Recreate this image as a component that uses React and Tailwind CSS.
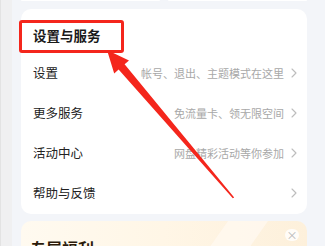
import React from 'react';

const rows = [
    { title: '设置', hint: '帐号、退出、主题模式在这里' },
    { title: '更多服务', hint: '免流量卡、领无限空间' },
    { title: '活动中心', hint: '网盘精彩活动等你参加' },
    { title: '帮助与反馈', hint: '' },
];

const Chevron = () => (
    <svg width="6" height="10" viewBox="0 0 6 10" className="ml-[7px]">
        <path d="M1 1l4 4-4 4" fill="none" stroke="#bdbdbd" strokeWidth="1.1" strokeLinecap="round" strokeLinejoin="round" />
    </svg>
);

const App = () => {
    return (
        <div
            className="relative w-[325px] h-[246px] overflow-hidden flex bg-[#f3f5f9]"
            style={{ fontFamily: '"Noto Sans CJK SC", "Noto Sans", sans-serif' }}
        >
            <div className="w-[12px] h-full bg-[#f0f0f1] border-l border-[#e3e3e3]" />

            <div className="flex flex-col w-[286px] ml-[9px]">
                <div className="flex gap-[8px] h-[2px] -mt-[8px] mb-[8px] box-content pt-[8px]">
                    <div className="flex-1 bg-white rounded-b-[10px]" />
                    <div className="flex-1 bg-white rounded-b-[10px]" />
                </div>

                <div className="bg-white rounded-[10px] flex flex-col">
                    <div className="h-[44px] pt-[17px] pl-[12px] text-[13.5px] leading-[18px] font-bold text-[#1a1a1a]">
                        设置与服务
                    </div>
                    {rows.map((r) => (
                        <div key={r.title} className="h-[40px] flex items-center pl-[12px] pr-[10px]">
                            <span className="text-[12.5px] text-[#222]">{r.title}</span>
                            <span className="ml-auto text-[11px] text-[#a8a8a8]">{r.hint}</span>
                            <Chevron />
                        </div>
                    ))}
                    <div className="h-[1px]" />
                </div>

                <div className="relative mt-[7px] h-[40px] rounded-t-[10px] bg-gradient-to-r from-[#fffaf0] via-[#fff6e6] to-[#fdf0db] overflow-hidden">
                    <div className="absolute right-[60px] top-0 w-[40px] h-[60px] bg-[#fffaf2] opacity-70 skew-x-[-35deg]" />
                    <div className="absolute right-[8px] top-[8px] w-[14px] h-[12px] rounded-[6px] bg-white/80 flex items-center justify-center text-[#b5b5b5] text-[11px] leading-none">
                        ×
                    </div>
                    <div className="absolute left-[9px] top-[15px] text-[16px] font-bold text-[#2a1a0a]">专属福利</div>
                </div>
            </div>

            <div className="flex-1" />

            <div className="absolute left-[19px] top-[20px] w-[105px] h-[33px] border-[3px] border-[#f4261c] rounded-[3px] pointer-events-none" />

            <svg className="absolute left-0 top-0 pointer-events-none" width="325" height="246" viewBox="0 0 325 246">
                <polygon
                    points="107,50 129,60.5 124.6,64.3 234.2,197.4 232.8,198.3 118.6,69.4 114.2,73.6"
                    fill="#f4261c"
                />
            </svg>
        </div>
    );
};

export default App;
